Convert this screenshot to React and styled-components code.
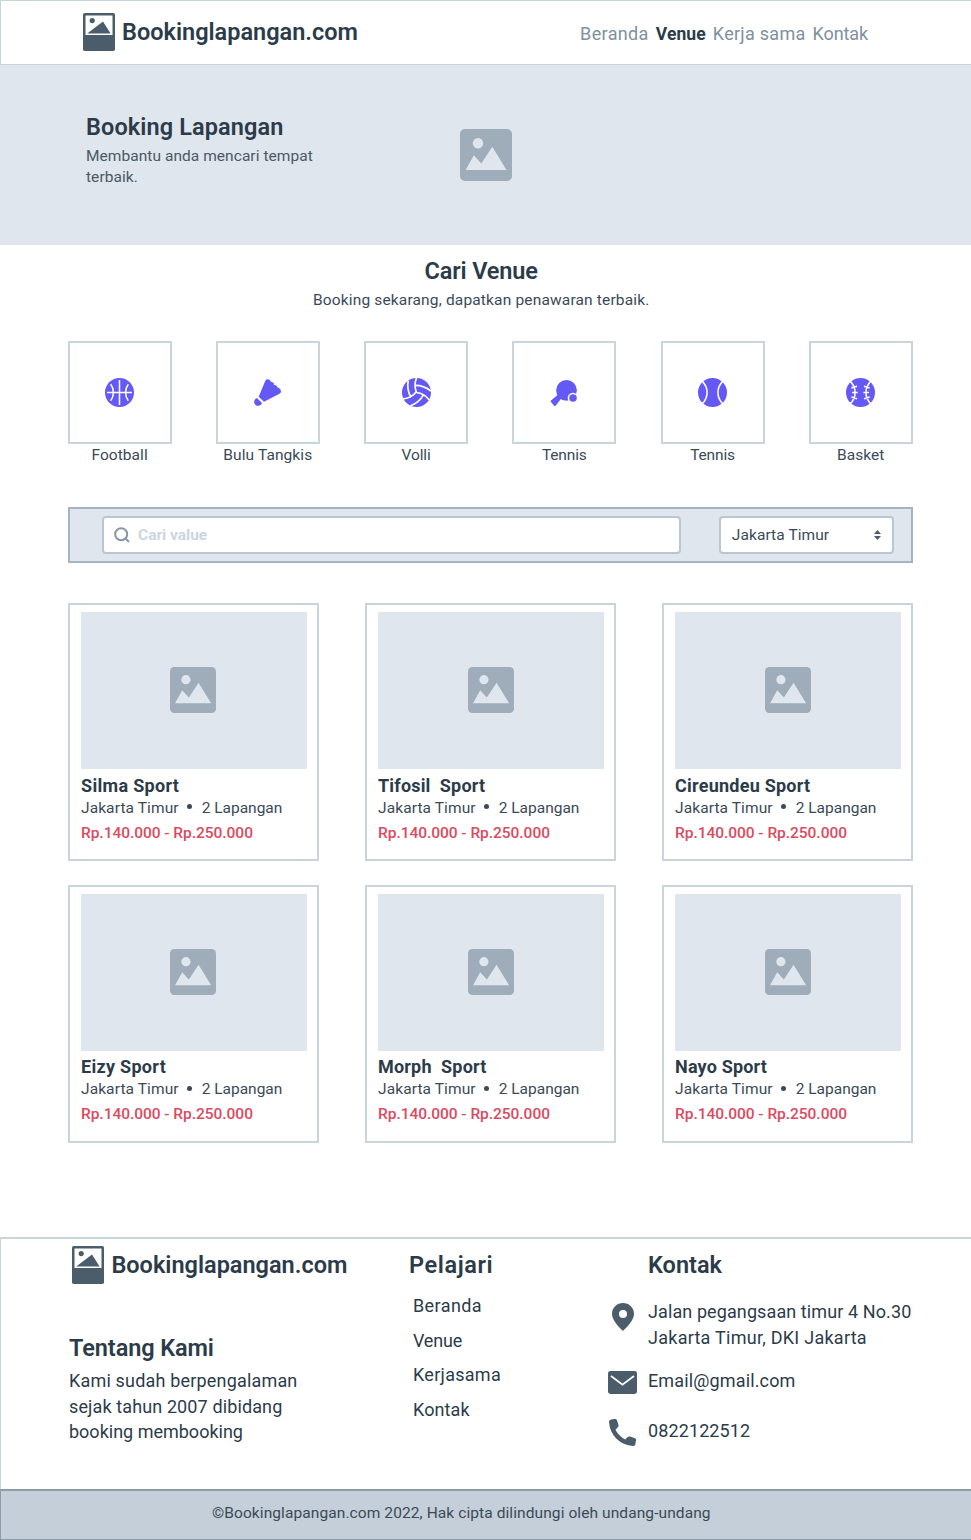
import React from "react";
import styled, { createGlobalStyle } from "styled-components";

const GlobalStyle = createGlobalStyle`
  * { box-sizing: border-box; }
  body { margin: 0; background: #fff; }
  h1, h2, h3, p { margin: 0; }
`;

const ink = "#2c3b49";
const body = "#3b4a57";
const line = "#c8d4de";
const panel = "#dfe6ee";
const slate = "#4b5d6b";
const purple = "#6459f5";

const Page = styled.div`
  width: 971px;
  height: 1540px;
  display: flex;
  flex-direction: column;
  font-family: Roboto, "Liberation Sans", sans-serif;
  color: ${ink};
  white-space: pre;
`;

const Heading = styled.h2`
  font-size: 23.5px;
  font-weight: 600;
  line-height: 28px;
  letter-spacing: ${(p) => p.$track ?? 0}px;
`;

const Small = styled.p`
  font-size: 15.5px;
  font-weight: 400;
  line-height: ${(p) => p.$line ?? 20}px;
  letter-spacing: ${(p) => p.$track ?? 0.1}px;
  color: ${(p) => p.$color ?? body};
`;

const Copy = styled.p`
  font-size: 18px;
  font-weight: 400;
  line-height: 25.7px;
  letter-spacing: ${(p) => p.$track ?? 0.1}px;
`;

/* Header */
const Header = styled.header`
  height: 65px;
  flex: none;
  display: flex;
  align-items: center;
  justify-content: space-between;
  padding: 0 103px 2px 82px;
  border: 1px solid ${line};
  border-right: 0;
`;

const BrandRow = styled.div`
  display: flex;
  align-items: center;
  gap: 7px;
`;

const Nav = styled.nav`
  display: flex;
  gap: 7px;
  padding-top: 4px;
`;

const NavLink = styled.a`
  font-size: ${(p) => (p.$active ? 17.5 : 18)}px;
  line-height: 24px;
  font-weight: ${(p) => (p.$active ? 700 : 400)};
  letter-spacing: ${(p) => p.$track}px;
  color: ${(p) => (p.$active ? ink : "#8090a0")};
`;

/* Hero */
const Hero = styled.section`
  height: 180px;
  flex: none;
  display: grid;
  grid-template-columns: 1fr auto 1fr;
  background: ${panel};
`;

const HeroText = styled.div`
  padding: 48px 0 0 86px;
  display: flex;
  flex-direction: column;
  gap: 5px;
`;

const HeroImage = styled.div`
  align-self: center;
  display: flex;
`;

/* Venue search */
const Main = styled.main`
  flex: 1;
  padding: 12px 58.200px 0 67.600px;
`;

const Intro = styled.div`
  display: flex;
  flex-direction: column;
  align-items: center;
  gap: 5px;
  padding-right: 18px;
`;

const Categories = styled.div`
  display: flex;
  justify-content: space-between;
  margin-top: 31px;
`;

const Category = styled.div`
  width: 104px;
  display: flex;
  flex-direction: column;
  align-items: center;
  gap: 1px;
`;

const CategoryBox = styled.div`
  width: 100%;
  height: 103px;
  display: flex;
  align-items: center;
  justify-content: center;
  padding-bottom: 1px;
  border: 2px solid ${line};
`;

const SearchBar = styled.div`
  height: 56px;
  margin-top: 42px;
  padding: 0 17px 0 32.400px;
  display: flex;
  align-items: center;
  justify-content: space-between;
  background: ${panel};
  border: 2px solid #a5b4c0;
`;

const Field = styled.div`
  width: ${(p) => p.$width}px;
  height: 38px;
  display: flex;
  align-items: center;
  padding: 0 10.500px;
  background: #fff;
  border: 2px solid #bac7d3;
  border-radius: 4px;
`;

const Placeholder = styled.span`
  margin-left: 7.500px;
  font-size: 15.5px;
  font-weight: 700;
  letter-spacing: 0;
  color: #cbd6e0;
`;

const SelectValue = styled(Small)`
  flex: 1;
`;

/* Cards */
const CardGrid = styled.div`
  display: grid;
  grid-template-columns: repeat(3, 251.2px);
  justify-content: space-between;
  row-gap: 23.7px;
  margin-top: 40px;
`;

const Card = styled.article`
  height: 258px;
  padding: 7px 10px 0 11.4px;
  border: 2px solid ${line};
`;

const CardImage = styled.div`
  width: 226px;
  height: 157px;
  display: flex;
  align-items: center;
  justify-content: center;
  padding: 0 1px 1px 0;
  background: ${panel};
`;

const CardTitle = styled.h3`
  margin-top: 4.5px;
  font-size: 18px;
  font-weight: 700;
  line-height: 24px;
  letter-spacing: ${(p) => p.$track}px;
`;

const CardMeta = styled.div`
  display: flex;
  align-items: center;
`;

const Dot = styled.span`
  width: 5px;
  height: 5px;
  margin: 0 10px 2px 8px;
  border-radius: 50%;
  background: ${body};
`;

const Price = styled.p`
  margin-top: 5px;
  font-size: 15.5px;
  font-weight: 500;
  line-height: 20px;
  letter-spacing: -0.04px;
  color: #dc4a60;
`;

/* Footer */
const Footer = styled.footer`
  flex: none;
  height: 252px;
  display: grid;
  grid-template-columns: 340px 199px 1fr;
  padding: 7px 0 0 68px;
  border-top: 2px solid ${line};
  border-left: 1px solid ${line};
`;

const AboutColumn = styled.div`
  display: flex;
  flex-direction: column;
`;

const FooterBrand = styled(BrandRow)`
  padding-left: 3.400px;
`;

const AboutTitle = styled(Heading)`
  margin: 50px 0 6px;
`;

const LinkColumn = styled.div`
  padding-top: 5px;
`;

const Links = styled.div`
  display: flex;
  flex-direction: column;
  gap: 9px;
  padding: 14px 0 0 4px;
`;

const ContactColumn = styled.div`
  padding-top: 5px;
`;

const ContactTitle = styled(Heading)`
  padding-left: 40px;
`;

const ContactRow = styled.div`
  display: grid;
  grid-template-columns: 29px 1fr;
  column-gap: 11px;
  margin-top: ${(p) => p.$top}px;
`;

const ContactIcon = styled.div`
  display: flex;
  justify-content: center;
  align-items: flex-start;
  height: 26px;
  padding-top: ${(p) => p.$drop}px;
`;

const Copyright = styled.div`
  flex: none;
  height: 51px;
  padding: 12px 0 0 211px;
  background: #c4cfd9;
  border: 1px solid #8c9ca9;
  border-top-width: 2px;
  border-right: 0;
`;

const Logo = () => (
  <svg width="32" height="38" viewBox="0 0 32 38">
    <rect width="32" height="38" rx="1.8" fill={slate} />
    <rect x="2.5" y="2.5" width="27" height="19.5" fill="#fff" />
    <path d="M4.2 20.5 20 8.4 27.6 20.5Z" fill={slate} />
    <circle cx="9.2" cy="7.6" r="2.6" fill={slate} />
  </svg>
);

const ImageMark = ({ size }) => (
  <svg width={size} height={size} viewBox="0 0 52 52">
    <rect width="52" height="52" rx="5" fill="#9eadb9" />
    <circle cx="18" cy="14.3" r="5.2" fill={panel} />
    <path d="M5.7 41 13.8 26.3 21.3 34.5 32.3 17.8 46.5 41Z" fill={panel} />
  </svg>
);

const Ball = ({ children }) => (
  <svg width="29" height="29" viewBox="0 0 87 87">
    <circle cx="43.5" cy="43.5" r="43.5" fill={purple} />
    <g fill="none" stroke="#fff" strokeWidth="4.6">{children}</g>
  </svg>
);

const Basketball = () => (
  <Ball>
    <path d="M43.5 6V81M6 43.5H81M17 19C28 33 28 54 17 68M70 19C59 33 59 54 70 68" />
  </Ball>
);

const TennisBall = () => (
  <Ball>
    <path d="M13 10C32 29 32 58 13 77M74 10C55 29 55 58 74 77" />
  </Ball>
);

const Baseball = () => (
  <Ball>
    <path d="M13 10C32 29 32 58 13 77M74 10C55 29 55 58 74 77M16 30 33 25M18 43.5H35M16 57 33 62M71 30 54 25M69 43.5H52M71 57 54 62" />
  </Ball>
);

const Volleyball = () => (
  <svg width="29" height="29" viewBox="2 2 20 20">
    <circle cx="12" cy="12" r="10" fill={purple} />
    <g fill="none" stroke="#fff" strokeWidth="1.15">
      <path d="M11.1 7.1a16.55 16.55 0 0 1 10.9 4" />
      <path d="M12 12a12.6 12.6 0 0 1-8.7 5Q2.500 17.100 1.500 17" transform="translate(0 -.7)" />
      <path d="M16.8 13.6a16.55 16.55 0 0 1-9 7.5" />
      <path d="M20.7 17a12.8 12.8 0 0 0-8.7-5 13.3 13.3 0 0 1 0-10" />
      <path d="M6.3 3.8a16.55 16.55 0 0 0 1.9 11.5" />
    </g>
  </svg>
);

const Shuttlecock = () => (
  <svg width="29" height="29" viewBox="0 0 87 87" fill={purple}>
    <path d="M37 8Q43 0 51 7Q53 13 59 13Q64 15 63 21Q71 19 73 28Q84 31 84 42Q82 46 78 48L33 71 17 56Z" />
    <path d="M12 60 27 75A12 12 0 1 1 12 60Z" />
  </svg>
);

const Paddle = () => (
  <svg width="29" height="29" viewBox="0 0 87 87">
    <path d="M20 48 22 52 2 68Q1 70 3 72L13 84Q16 85 17 83L33 62 50 66 80 36 40 20Z" fill={purple} />
    <circle cx="49.5" cy="37" r="31" fill={purple} />
    <circle cx="69" cy="60" r="16" fill="#fff" />
    <circle cx="69" cy="60" r="11.3" fill={purple} />
  </svg>
);

const SearchIcon = () => (
  <svg width="16" height="16" viewBox="0 0 16 16" fill="none" stroke="#8696a4" strokeWidth="2">
    <circle cx="7.2" cy="7.2" r="6" />
    <path d="M11.4 11.4 15 15" />
  </svg>
);

const SelectArrows = () => (
  <svg width="7" height="12" viewBox="0 0 7 12" fill={slate}>
    <path d="M3.5 1 7 5H0ZM3.5 11 7 7H0Z" />
  </svg>
);

const PinIcon = () => (
  <svg width="22" height="28" viewBox="0 0 22 28">
    <path fillRule="evenodd" d="M11 0C4.9 0 0 4.8 0 10.8 0 18.5 11 28 11 28S22 18.5 22 10.8C22 4.8 17.100 0 11 0ZM11 7A4 4 0 1 1 11 15 4 4 0 0 1 11 7Z" fill={slate} />
  </svg>
);

const MailIcon = () => (
  <svg width="29" height="23" viewBox="0 0 29 23">
    <rect width="29" height="23" rx="2.4" fill={slate} />
    <path d="M3 5 14.5 13.600 26 5" fill="none" stroke="#fff" strokeWidth="1.8" />
  </svg>
);

const PhoneIcon = () => (
  <svg width="27" height="27" viewBox="3 3 18 18" fill={slate}>
    <path d="M6.200 3Q8 2.700 8.300 3.900L9.300 6.900Q9.500 8 8.700 8.700L7.300 10.200Q9.600 14.500 13.800 16.700L15.200 15.200Q15.900 14.400 17 14.700L20.300 15.800Q21.300 16.200 21 17.300L20.500 20Q20.200 21 19.100 21 12.500 20.600 7.800 16 3.400 11.500 3 4.900 3 3.800 4 3.500Z" />
  </svg>
);

const categories = [
  ["Football", Basketball, 0.05],
  ["Bulu Tangkis", Shuttlecock, 0.1],
  ["Volli", Volleyball, -0.15],
  ["Tennis", Paddle, -0.15],
  ["Tennis", TennisBall, -0.15],
  ["Basket", Baseball, 0.05],
];

const venues = [
  ["Silma Sport", 0.31],
  ["Tifosil  Sport", 0.18],
  ["Cireundeu Sport", 0.24],
  ["Eizy Sport", 0.3],
  ["Morph  Sport", 0.2],
  ["Nayo Sport", 0.18],
];

export default function App() {
  return (
    <Page>
      <GlobalStyle />
      <Header>
        <BrandRow>
          <Logo />
          <Heading as="h1">Bookinglapangan.com</Heading>
        </BrandRow>
        <Nav>
          <NavLink $track={0.35}>Beranda</NavLink>
          <NavLink $active $track={0.1}>Venue</NavLink>
          <NavLink $track={0.28}>Kerja sama</NavLink>
          <NavLink $track={-0.1}>Kontak</NavLink>
        </Nav>
      </Header>

      <Hero>
        <HeroText>
          <Heading $track={0.1}>Booking Lapangan</Heading>
          <Small $line={21.3} $track={0.05} $color="#4b5965">{"Membantu anda mencari tempat\nterbaik."}</Small>
        </HeroText>
        <HeroImage>
          <ImageMark size={52} />
        </HeroImage>
      </Hero>

      <Main>
        <Intro>
          <Heading $track={-0.15}>Cari Venue</Heading>
          <Small $track={0.16}>Booking sekarang, dapatkan penawaran terbaik.</Small>
        </Intro>

        <Categories>
          {categories.map(([name, Icon, track], i) => (
            <Category key={i}>
              <CategoryBox>
                <Icon />
              </CategoryBox>
              <Small $track={track}>{name}</Small>
            </Category>
          ))}
        </Categories>

        <SearchBar>
          <Field $width={579.5}>
            <SearchIcon />
            <Placeholder>Cari value</Placeholder>
          </Field>
          <Field $width={174.5}>
            <SelectValue $track={0.08}>Jakarta Timur</SelectValue>
            <SelectArrows />
          </Field>
        </SearchBar>

        <CardGrid>
          {venues.map(([name, track]) => (
            <Card key={name}>
              <CardImage>
                <ImageMark size={46} />
              </CardImage>
              <CardTitle $track={track}>{name}</CardTitle>
              <CardMeta>
                <Small>Jakarta Timur</Small>
                <Dot />
                <Small $track={0}>2 Lapangan</Small>
              </CardMeta>
              <Price>Rp.140.000 - Rp.250.000</Price>
            </Card>
          ))}
        </CardGrid>
      </Main>

      <Footer>
        <AboutColumn>
          <FooterBrand>
            <Logo />
            <Heading>Bookinglapangan.com</Heading>
          </FooterBrand>
          <AboutTitle $track={-0.1}>Tentang Kami</AboutTitle>
          <Copy $track={0.18}>Kami sudah berpengalaman</Copy>
          <Copy $track={0.12}>sejak tahun 2007 dibidang</Copy>
          <Copy $track={0}>booking membooking</Copy>
        </AboutColumn>
        <LinkColumn>
          <Heading $track={0.6}>Pelajari</Heading>
          <Links>
            <Copy as="a" $track={0.4}>Beranda</Copy>
            <Copy as="a" $track={-0.2}>Venue</Copy>
            <Copy as="a" $track={0.28}>Kerjasama</Copy>
            <Copy as="a" $track={0.1}>Kontak</Copy>
          </Links>
        </LinkColumn>
        <ContactColumn>
          <ContactTitle $track={0}>Kontak</ContactTitle>
          <ContactRow $top={20}>
            <ContactIcon $drop={4}>
              <PinIcon />
            </ContactIcon>
            <div>
              <Copy $track={0.1}>Jalan pegangsaan timur 4 No.30</Copy>
              <Copy $track={0.26}>Jakarta Timur, DKI Jakarta</Copy>
            </div>
          </ContactRow>
          <ContactRow $top={17.5}>
            <ContactIcon $drop={3.5}>
              <MailIcon />
            </ContactIcon>
            <Copy $track={0.14}>Email@gmail.com</Copy>
          </ContactRow>
          <ContactRow $top={24.5}>
            <ContactIcon $drop={1}>
              <PhoneIcon />
            </ContactIcon>
            <Copy $track={0.11}>0822122512</Copy>
          </ContactRow>
        </ContactColumn>
      </Footer>
      <Copyright>
        <Small $track={0.09}>©Bookinglapangan.com 2022, Hak cipta dilindungi oleh undang-undang</Small>
      </Copyright>
    </Page>
  );
}
